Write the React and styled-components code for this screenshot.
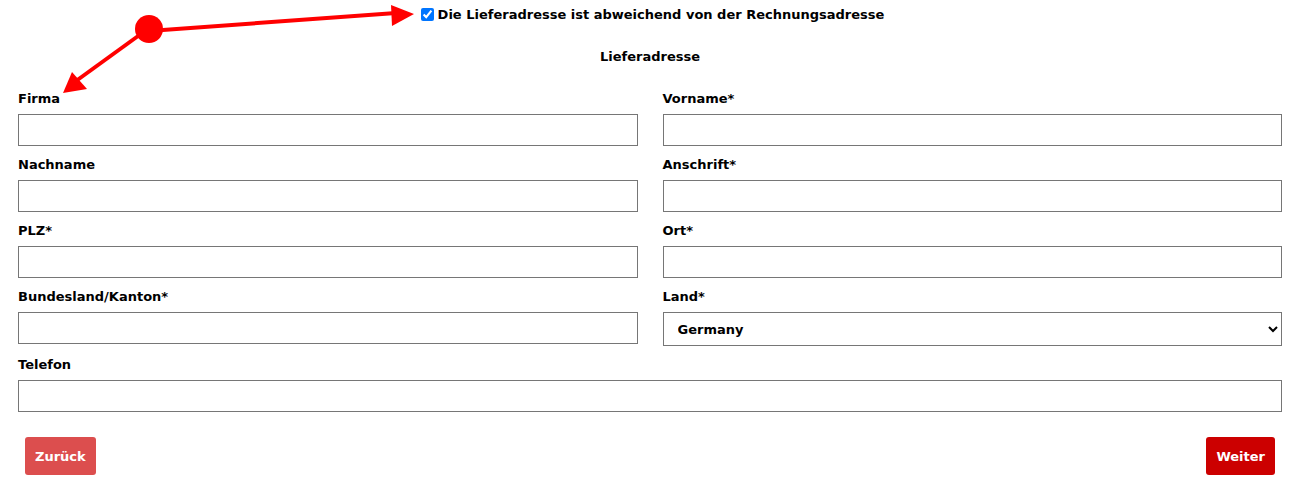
import React from "react";
import styled, { createGlobalStyle } from "styled-components";

const GlobalStyle = createGlobalStyle`
  body {
    margin: 0;
    background: #fff;
    font-family: Tahoma, "DejaVu Sans", Verdana, sans-serif;
    color: #000;
  }
`;

const Page = styled.div`
  position: relative;
  padding: 0 10px 0 18px;
`;

const Overlay = styled.svg`
  position: absolute;
  left: 0;
  top: 0;
  pointer-events: none;
`;

const CheckRow = styled.label`
  display: flex;
  justify-content: center;
  align-items: center;
  gap: 4px;
  height: 28px;
  font-size: 13px;
  font-weight: bold;
  padding-left: 5px;

  input {
    margin: 0;
    width: 13px;
    height: 13px;
    accent-color: #0075ff;
  }
`;

const Title = styled.div`
  margin-top: 19px;
  height: 20px;
  line-height: 20px;
  text-align: center;
  font-size: 13px;
  font-weight: bold;
`;

const FormGrid = styled.div`
  display: grid;
  grid-template-columns: 1fr 1fr;
  column-gap: 25px;
  margin-top: 21px;
`;

const Field = styled.div`
  grid-column: ${(p) => (p.$wide ? "1 / 3" : "auto")};
  display: flex;
  flex-direction: column;
  padding-bottom: 8px;
`;

const Label = styled.label`
  height: 20px;
  padding-top: 1px;
  line-height: 20px;
  font-size: 13px;
  font-weight: bold;
  margin-bottom: 5px;
`;

const Input = styled.input`
  box-sizing: border-box;
  height: 32px;
  width: 100%;
  border: 1px solid #767676;
  border-radius: 0;
  padding: 0 12px;
`;

const Select = styled.select`
  box-sizing: border-box;
  height: 34px;
  width: 100%;
  border: 1px solid #767676;
  border-radius: 0;
  background: #fff;
  padding: 0 8px 0 10px;
  font-family: inherit;
  font-size: 13px;
  font-weight: bold;
  color: #000;
`;

const Buttons = styled.div`
  display: flex;
  justify-content: space-between;
  padding: 17px 7px 0;
`;

const Button = styled.button`
  height: 38px;
  padding: 0 10px;
  border: none;
  border-radius: 3px;
  background: ${(p) => (p.$muted ? "#dc4e4e" : "#cc0000")};
  color: #fff;
  font-family: inherit;
  font-size: 13px;
  font-weight: bold;
`;

const fields = [
  { label: "Firma" },
  { label: "Vorname*" },
  { label: "Nachname" },
  { label: "Anschrift*" },
  { label: "PLZ*" },
  { label: "Ort*" },
  { label: "Bundesland/Kanton*" },
  { label: "Land*", select: true },
  { label: "Telefon", wide: true },
];

function Arrows() {
  return (
    <Overlay width="430" height="100" viewBox="0 0 430 100">
      <circle cx="149" cy="29" r="14" fill="#ff0000" />
      <line x1="149" y1="31" x2="396" y2="13" stroke="#ff0000" strokeWidth="4" />
      <polygon points="414,14 391,5 392,26" fill="#ff0000" />
      <line x1="145" y1="31" x2="76" y2="81" stroke="#ff0000" strokeWidth="4" />
      <polygon points="63,93 72,72 87,89" fill="#ff0000" />
    </Overlay>
  );
}

export default function App() {
  return (
    <Page>
      <GlobalStyle />
      <Arrows />
      <CheckRow>
        <input type="checkbox" defaultChecked />
        Die Lieferadresse ist abweichend von der Rechnungsadresse
      </CheckRow>
      <Title>Lieferadresse</Title>
      <FormGrid>
        {fields.map((f) => (
          <Field key={f.label} $wide={f.wide}>
            <Label>{f.label}</Label>
            {f.select ? (
              <Select defaultValue="DE">
                <option value="DE">Germany</option>
                <option value="AT">Austria</option>
                <option value="CH">Switzerland</option>
              </Select>
            ) : (
              <Input type="text" />
            )}
          </Field>
        ))}
      </FormGrid>
      <Buttons>
        <Button $muted>Zurück</Button>
        <Button>Weiter</Button>
      </Buttons>
    </Page>
  );
}
